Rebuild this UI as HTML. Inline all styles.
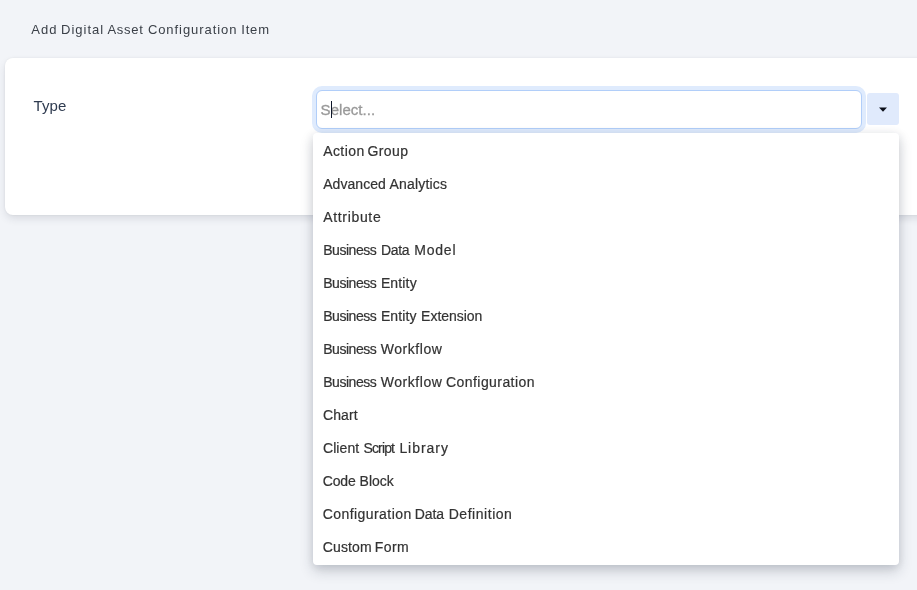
<!DOCTYPE html>
<html><head><meta charset="utf-8">
<style>
*{box-sizing:border-box;margin:0;padding:0}
html,body{width:917px;height:590px;overflow:hidden;background:#f2f4f8;font-family:"Liberation Sans",sans-serif;}
body{position:relative}
.layer{position:absolute;left:0;top:0;width:917px;height:590px;will-change:transform}
.title span{position:absolute;font-size:13px;line-height:16px;color:#3b4048;white-space:nowrap}
.card{position:absolute;left:5px;top:58px;width:930px;height:157px;background:#fff;border-radius:8px;box-shadow:0 4px 9px -1px rgba(40,50,70,.14),0 0 3px rgba(40,50,70,.07)}
.label{position:absolute;left:33.5px;top:97px;font-size:15px;line-height:18px;letter-spacing:.1px;color:#2f3b50;white-space:nowrap}
.input{position:absolute;left:316px;top:90px;width:546px;height:39px;background:#fff;border:1px solid #b1cef9;border-radius:6px;box-shadow:0 0 0 4px #dfebfd}
.ph{position:absolute;left:320.6px;top:101px;font-size:15px;line-height:18px;letter-spacing:.05px;color:#999;white-space:nowrap;-webkit-text-stroke:.3px #999}
.caret{position:absolute;left:331px;top:101px;width:1px;height:17px;background:#0f172a}
.btn{position:absolute;left:867px;top:93px;width:32px;height:32px;background:#e0eafc;border-radius:3px}
.btn svg{position:absolute;left:0;top:0}
.dd{position:absolute;left:313px;top:133px;width:586px;height:432px;background:#fff;border-radius:4px;box-shadow:0 6px 14px rgba(30,40,60,.20),0 2px 10px rgba(30,40,60,.10)}
.it span{position:absolute;font-size:14px;line-height:18px;color:#333;white-space:nowrap;-webkit-text-stroke:.2px #333}
</style></head><body>
<div class="layer">
<div class="title"><span style="left:31.3px;top:22px;letter-spacing:0.97px">Add</span><span style="left:61.08px;top:22px;letter-spacing:1px">Digital</span><span style="left:107.4px;top:22px;letter-spacing:0.73px">Asset</span><span style="left:147.88px;top:22px;letter-spacing:0.94px">Configuration</span><span style="left:241.15px;top:22px;letter-spacing:0.88px">Item</span></div>
<div class="card"></div>
<div class="label">Type</div>
<div class="input"></div>
<div class="ph">Select...</div>
<div class="caret"></div>
<div class="btn"><svg width="32" height="32" viewBox="0 0 32 32"><path d="M12 14.5h8L16 18.7z" fill="#0b0f19"/></svg></div>
<div class="dd"></div>
<div class="it"><span style="left:323.2px;top:142px;letter-spacing:0.42px">Action</span><span style="left:367.45px;top:142px;letter-spacing:0.42px">Group</span></div>
<div class="it"><span style="left:323.2px;top:175px;letter-spacing:0.06px">Advanced</span><span style="left:389.4px;top:175px;letter-spacing:0.2px">Analytics</span></div>
<div class="it"><span style="left:323.2px;top:208px;letter-spacing:0.67px">Attribute</span></div>
<div class="it"><span style="left:323.18px;top:241px;letter-spacing:-0.45px">Business</span><span style="left:380.88px;top:241px;letter-spacing:-0.27px">Data</span><span style="left:414.28px;top:241px;letter-spacing:0.79px">Model</span></div>
<div class="it"><span style="left:323.18px;top:274px;letter-spacing:-0.45px">Business</span><span style="left:380.88px;top:274px;letter-spacing:0.15px">Entity</span></div>
<div class="it"><span style="left:323.18px;top:307px;letter-spacing:-0.45px">Business</span><span style="left:380.88px;top:307px;letter-spacing:0.11px">Entity</span><span style="left:421.08px;top:307px;letter-spacing:-0.02px">Extension</span></div>
<div class="it"><span style="left:323.18px;top:340px;letter-spacing:-0.45px">Business</span><span style="left:380.78px;top:340px;letter-spacing:0.55px">Workflow</span></div>
<div class="it"><span style="left:323.18px;top:373px;letter-spacing:-0.45px">Business</span><span style="left:380.78px;top:373px;letter-spacing:0.55px">Workflow</span><span style="left:446.05px;top:373px;letter-spacing:0.43px">Configuration</span></div>
<div class="it"><span style="left:322.95px;top:406px;letter-spacing:0.13px">Chart</span></div>
<div class="it"><span style="left:322.95px;top:439px;letter-spacing:0.1px">Client</span><span style="left:363.48px;top:439px;letter-spacing:-0.85px">Script</span><span style="left:399.38px;top:439px;letter-spacing:0.96px">Library</span></div>
<div class="it"><span style="left:322.75px;top:472px;letter-spacing:-0.17px">Code</span><span style="left:359.58px;top:472px;letter-spacing:-0.01px">Block</span></div>
<div class="it"><span style="left:322.75px;top:505px;letter-spacing:0.43px">Configuration</span><span style="left:414.78px;top:505px;letter-spacing:-0.07px">Data</span><span style="left:448.68px;top:505px;letter-spacing:0.54px">Definition</span></div>
<div class="it"><span style="left:322.75px;top:538px;letter-spacing:0.14px">Custom</span><span style="left:374.68px;top:538px;letter-spacing:0.46px">Form</span></div>
</div>
</body></html>
